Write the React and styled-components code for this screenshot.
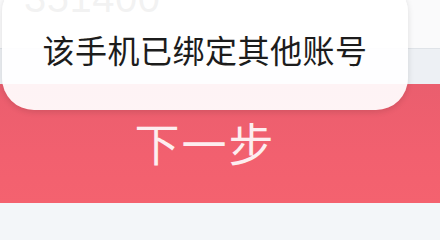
import styled, { createGlobalStyle } from "styled-components";

const GlobalStyle = createGlobalStyle`
  html, body {
    margin: 0;
    padding: 0;
    background: #f3f6f9;
    font-family: "Noto Sans CJK SC", "Noto Sans", sans-serif;
    overflow: hidden;
  }
`;

const Page = styled.div`
  position: relative;
  width: 440px;
  height: 233px;
  display: flex;
  flex-direction: column;
  background: #f3f6f9;
  overflow: hidden;
`;

const PhoneRow = styled.div`
  height: 48px;
  flex-shrink: 0;
  display: flex;
  align-items: flex-end;
  padding-left: 24px;
  background: #fafafb;
  border-bottom: 1px solid #dfe3e8;
  overflow: hidden;
`;

const PhoneNumber = styled.span`
  font-family: "Liberation Sans", "Noto Sans", sans-serif;
  font-size: 40px;
  line-height: 1;
  color: #4a4a4a;
  margin-bottom: 30px;
  letter-spacing: 0.5px;
`;

const Gap = styled.div`
  height: 35px;
  flex-shrink: 0;
  background: #edf0f4;
`;

const NextButton = styled.button`
  height: 119px;
  flex-shrink: 0;
  border: none;
  padding: 0 30px 2px 0;
  background: linear-gradient(180deg, #ea5e6e 0%, #f2606f 60%, #f4626f 100%);
  color: #fdeef0;
  font-family: "Noto Sans CJK SC", "Noto Sans", sans-serif;
  font-size: 45px;
  letter-spacing: 2px;
  display: flex;
  align-items: center;
  justify-content: center;
`;

const Toast = styled.div`
  position: absolute;
  left: 2px;
  top: -20px;
  width: 406px;
  height: 130px;
  box-sizing: border-box;
  padding-top: 20px;
  border-radius: 32px;
  background: rgba(255, 255, 255, 0.93);
  box-shadow: 0 2px 6px rgba(0, 0, 0, 0.12);
  display: flex;
  align-items: center;
  justify-content: center;
`;

const ToastText = styled.span`
  font-size: 32px;
  color: #1c1c1c;
  margin-top: -12px;
  letter-spacing: 0.5px;
`;

export default function App() {
  return (
    <>
      <GlobalStyle />
      <Page>
        <PhoneRow>
          <PhoneNumber>351400</PhoneNumber>
        </PhoneRow>
        <Gap />
        <NextButton>下一步</NextButton>
        <Toast>
          <ToastText>该手机已绑定其他账号</ToastText>
        </Toast>
      </Page>
    </>
  );
}
